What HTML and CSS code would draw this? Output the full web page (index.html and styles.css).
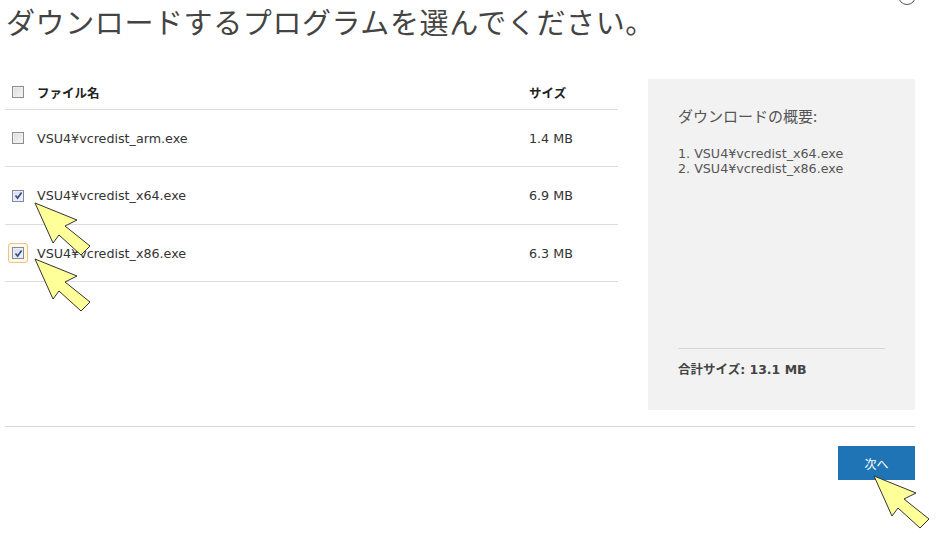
FILE: index.html
```html
<!DOCTYPE html>
<html lang="ja">
<head>
<meta charset="utf-8">
<title>ダウンロード</title>
<link rel="stylesheet" href="styles.css">
</head>
<body>
<div class="page">
  <span class="corner-icon"></span>
  <h1 class="title">ダウンロードするプログラムを選んでください。</h1>
  <div class="main">
    <div class="table">
      <div class="row head">
        <span class="cell-check"><span class="cb"></span></span>
        <span class="cell-name">ファイル名</span>
        <span class="cell-size">サイズ</span>
      </div>
      <div class="row">
        <span class="cell-check"><span class="cb"></span></span>
        <span class="cell-name">VSU4¥vcredist_arm.exe</span>
        <span class="cell-size">1.4 MB</span>
      </div>
      <div class="row tall">
        <span class="cell-check"><span class="cb checked"><svg viewBox="0 0 9 9" class="tick"><path d="M1.5 4.5 L3.6 7 L7.6 1.5" /></svg></span></span>
        <span class="cell-name">VSU4¥vcredist_x64.exe</span>
        <span class="cell-size">6.9 MB</span>
      </div>
      <div class="row">
        <span class="cell-check"><span class="focus"><span class="cb checked"><svg viewBox="0 0 9 9" class="tick"><path d="M1.5 4.5 L3.6 7 L7.6 1.5" /></svg></span></span></span>
        <span class="cell-name">VSU4¥vcredist_x86.exe</span>
        <span class="cell-size">6.3 MB</span>
      </div>
    </div>
    <aside class="summary">
      <h2 class="summary-title">ダウンロードの概要:</h2>
      <ol class="summary-list">
        <li>1. VSU4¥vcredist_x64.exe</li>
        <li>2. VSU4¥vcredist_x86.exe</li>
      </ol>
      <div class="summary-total">合計サイズ: 13.1 MB</div>
    </aside>
  </div>
  <div class="footer">
    <button class="next">次へ</button>
  </div>

  <svg class="pointer p1" viewBox="0 0 60 56"><polygon points="1,1 43,18 31,24 56,44 47,53 25,33 19,41"/></svg>
  <svg class="pointer p2" viewBox="0 0 60 56"><polygon points="1,1 43,18 31,24 56,44 47,53 25,33 19,41"/></svg>
  <svg class="pointer p3" viewBox="0 0 60 56"><polygon points="1,1 43,18 31,24 56,44 47,53 25,33 19,41"/></svg>
</div>
</body>
</html>
```

FILE: styles.css
```css
* { box-sizing: border-box; }
html, body { margin: 0; padding: 0; background: #fff; }
body {
  font-family: "DejaVu Sans", "Noto Sans CJK JP", sans-serif;
  color: #333;
  width: 938px;
  height: 534px;
  overflow: hidden;
}
.page {
  position: relative;
  padding: 0 23px 0 5px;
}
.corner-icon {
  position: absolute;
  left: 898px;
  top: -13px;
  width: 18px;
  height: 18px;
  border: 1.5px solid #555;
  border-radius: 50%;
}
.title {
  margin: 0;
  padding: 2px 0 0 1px;
  font-family: "Noto Sans CJK JP", sans-serif;
  font-weight: 400;
  font-size: 29px;
  line-height: 38px;
  color: #444;
  letter-spacing: 0.6px;
}
.main {
  display: flex;
  gap: 30px;
  margin-top: 39px;
}
.table {
  width: 613px;
  margin-top: -4px;
}
.row {
  display: flex;
  align-items: center;
  height: 57px;
  border-bottom: 1px solid #ddd;
  font-size: 12.7px;
}
.row.tall { height: 58px; }
.row.head {
  height: 35px;
  padding-bottom: 0;
  font-family: "Noto Sans CJK JP", sans-serif;
  font-weight: 700;
  font-size: 12.5px;
  color: #222;
}
.cell-check {
  width: 32px;
  padding-left: 7px;
  display: flex;
  align-items: center;
}
.cell-name { flex: 1; }
.cell-size { width: 89px; }
.cb {
  display: inline-flex;
  align-items: center;
  justify-content: center;
  width: 12px;
  height: 12px;
  border: 1px solid #8e8f8f;
  background: linear-gradient(135deg, #dcdcdc, #f6f6f6);
  box-shadow: inset 0 0 0 1px #eee;
}
.cb.checked {
  border-color: #7d8aa8;
  background: linear-gradient(135deg, #d6dbe8, #f4f5fa);
}
.tick {
  width: 9px;
  height: 9px;
}
.tick path {
  fill: none;
  stroke: #3b4d8c;
  stroke-width: 1.7;
}
.focus {
  display: inline-flex;
  padding: 3px;
  margin: -4px;
  border: 1px solid #f1c27a;
  border-radius: 3px;
  background: #fff7e8;
}
.summary {
  width: 267px;
  height: 331px;
  background: #f2f2f2;
  padding: 26px 30px 31px 30px;
  display: flex;
  flex-direction: column;
}
.summary-title {
  margin: 0;
  font-family: "Noto Sans CJK JP", sans-serif;
  font-weight: 400;
  font-size: 15px;
  line-height: 22px;
  color: #555;
}
.summary-list {
  list-style: none;
  margin: 19px 0 0 0;
  padding: 0;
  font-size: 12.7px;
  line-height: 15px;
  color: #555;
}
.summary-total {
  margin-top: auto;
  border-top: 1px solid #d6d6d6;
  padding-top: 12px;
  font-family: "DejaVu Sans", "Noto Sans CJK JP", sans-serif;
  font-weight: 700;
  font-size: 12.5px;
  line-height: 18px;
  color: #444;
}
.footer {
  margin-top: 16px;
  border-top: 1px solid #d6d6d6;
  padding-top: 19px;
  display: flex;
  justify-content: flex-end;
}
.next {
  width: 77px;
  height: 34px;
  border: none;
  background: #1f74b6;
  color: #fff;
  font-family: "Noto Sans CJK JP", sans-serif;
  font-size: 12px;
  cursor: pointer;
}
.pointer {
  position: absolute;
  width: 60px;
  height: 56px;
  overflow: visible;
}
.pointer polygon {
  fill: #ffff9a;
  stroke: #333;
  stroke-width: 1;
  stroke-linejoin: round;
}
.p1 { left: 34px; top: 202px; }
.p2 { left: 34px; top: 258px; }
.p3 { left: 873px; top: 475px; }
```
